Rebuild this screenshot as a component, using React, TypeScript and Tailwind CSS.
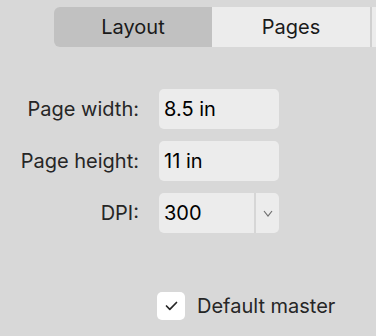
import React from 'react';

const font = { fontFamily: 'Inter, "Liberation Sans", sans-serif' };

function Field({ label, children }: { label: string; children: React.ReactNode }) {
  return (
    <>
      <div className="flex h-[40px] items-center justify-end text-[20px] text-[#262626]">{label}</div>
      {children}
    </>
  );
}

export default function App() {
  return (
    <div className="h-[336px] w-[376px] overflow-hidden bg-[#d8d8d8]" style={font}>
      {/* tabs */}
      <div className="flex pl-[54px] pt-[7px]">
        <div className="flex h-[40px] w-[158px] shrink-0 items-center justify-center rounded-l-[6px] bg-[#c1c1c1] text-[20px] text-[#1a1a1a]">
          Layout
        </div>
        <div className="flex h-[40px] w-[158px] shrink-0 items-center justify-center bg-[#ececec] text-[20px] text-[#1a1a1a]">
          Pages
        </div>
        <div className="h-[40px] w-[2px] shrink-0 bg-[#d0d0d0]" />
        <div className="h-[40px] w-[20px] shrink-0 bg-[#ececec]" />
      </div>

      {/* form */}
      <div className="mt-[42px] grid grid-cols-[139px_120px] gap-x-[20px] gap-y-[12px]">
        <Field label="Page width:">
          <div className="flex h-[40px] items-center rounded-[5px] bg-[#ececec] pl-[5px] text-[20px] text-black">8.5 in</div>
        </Field>
        <Field label="Page height:">
          <div className="flex h-[40px] items-center rounded-[5px] bg-[#ececec] pl-[5px] text-[20px] text-black">11 in</div>
        </Field>
        <Field label="DPI:">
          <div className="flex h-[40px] rounded-[5px] bg-[#ececec] text-[20px] text-black">
            <div className="flex flex-1 items-center pl-[5px]">300</div>
            <div className="w-[2px] bg-[#d6d6d6]" />
            <div className="flex w-[23px] items-center justify-center">
              <svg width="10" height="7" viewBox="0 0 10 7" fill="none">
                <path d="M1 1 L5 6 L9 1" stroke="#6e6e6e" strokeWidth="1.2" />
              </svg>
            </div>
          </div>
        </Field>
      </div>

      {/* checkbox */}
      <div className="mt-[58px] flex items-center pl-[157px]">
        <div className="flex h-[28px] w-[28px] items-center justify-center rounded-[5px] bg-white">
          <svg width="13" height="10" viewBox="0 0 13 10" fill="none">
            <path d="M1.5 5 L4.8 8.3 L11.5 1.5" stroke="#262626" strokeWidth="1.7" strokeLinecap="round" strokeLinejoin="round" />
          </svg>
        </div>
        <span className="ml-[12px] text-[20px] text-[#262626]">Default master</span>
      </div>
    </div>
  );
}
